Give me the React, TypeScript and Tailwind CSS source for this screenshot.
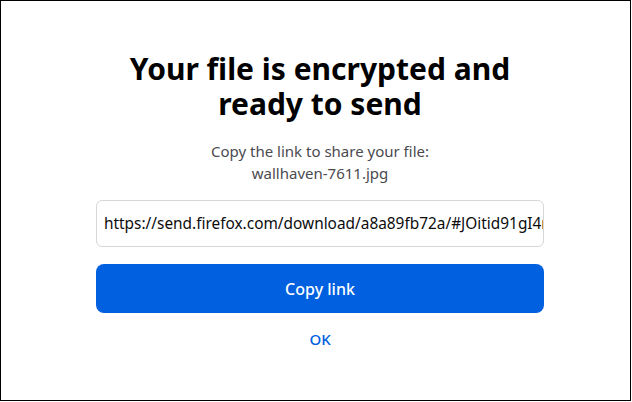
import React from "react";

export default function App() {
  return (
    <div className="w-[632px] h-[402px] bg-white">
      <div
        className="w-[631px] h-[401px] border border-black bg-white"
        style={{ fontFamily: '"Noto Sans", "Open Sans", sans-serif' }}
      >
        <div className="ml-[95px] w-[448px] flex flex-col items-center pt-[50px]">
          <h1 className="text-[30px] leading-[35px] font-bold text-black text-center">
            Your file is encrypted and
            <br />
            ready to send
          </h1>
          <p className="mt-[19px] text-[15px] leading-[22px] text-[#4a4a4f] text-center">
            Copy the link to share your file:
            <br />
            wallhaven-7611.jpg
          </p>
          <div className="mt-[16px] w-full h-[47px] border border-[#d7d7db] rounded-[6px] flex items-center pl-[7px] overflow-hidden">
            <span className="whitespace-nowrap text-[15.4px] text-[#0c0c0d]">
              https://send.firefox.com/download/a8a89fb72a/#JOitid91gI4rQk2x
            </span>
          </div>
          <button className="mt-[17px] w-full h-[49px] rounded-[8px] bg-[#0060df] text-white text-[16px] font-medium flex items-center justify-center">
            Copy link
          </button>
          <button className="mt-[15px] text-[15px] font-medium text-[#0060df]">OK</button>
        </div>
      </div>
    </div>
  );
}
